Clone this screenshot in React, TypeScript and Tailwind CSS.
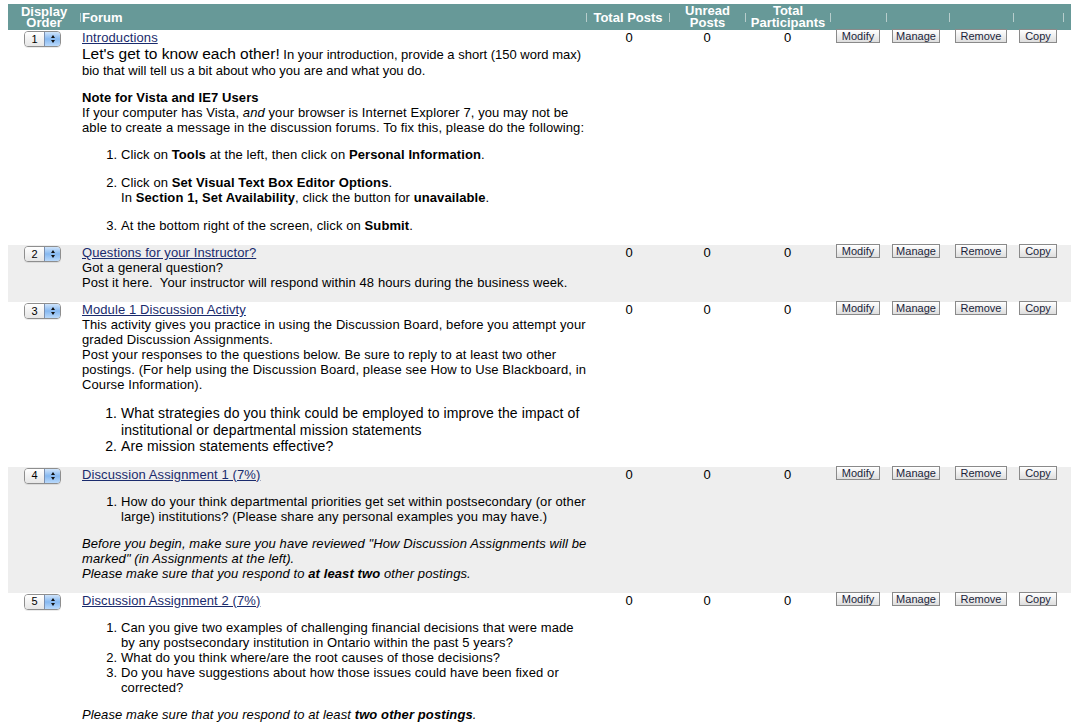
import React from "react";

const HEAD_COLS = "grid grid-cols-[72px_506px_83px_76px_85px_56px_63px_64px_50px_8px]";
const COLS = "grid grid-cols-[72px_509px_80px_76px_85px_56px_63px_64px_50px_8px]";

function Sep() {
  return <span className="h-[9px] w-px shrink-0 bg-[#b7cdcc]" />;
}

function HeadCell({ children, left }: { children?: React.ReactNode; left?: boolean }) {
  return (
    <div className="flex h-full items-center">
      <Sep />
      <div className={left ? "flex-1 pl-[1px] text-left" : "flex-1 text-center"}>{children}</div>
    </div>
  );
}

function Order({ n }: { n: number }) {
  return (
    <div className="ml-[16px] mt-[1px] flex h-[16px] w-[37px] overflow-hidden rounded-[4px] border border-[#8e8e8e] shadow-[0_1px_0_rgba(0,0,0,0.08)]">
      <div className="flex flex-1 items-center justify-center bg-linear-to-b from-white to-[#e6e6e6] text-[11px] leading-none text-black">
        {n}
      </div>
      <div className="flex w-[16px] flex-col items-center justify-center gap-[2px] border-l border-[#7a8fb0] bg-linear-to-b from-[#cfe4fb] via-[#86b8f0] to-[#b9d9fb]">
        <span className="block h-0 w-0 border-x-[2.5px] border-b-[3px] border-x-transparent border-b-[#111]" />
        <span className="block h-0 w-0 border-x-[2.5px] border-t-[3px] border-x-transparent border-t-[#111]" />
      </div>
    </div>
  );
}

function Btn({ label, w }: { label: string; w: string }) {
  return (
    <button
      className={`${w} ml-[6px] -mt-px h-[14px] border border-[#8a8a8a] bg-linear-to-b from-white to-[#dedede] text-center text-[11px] leading-[12px] tracking-normal text-[#1b1f3a]`}
    >
      {label}
    </button>
  );
}

function Row({ n, gray, children }: { n: number; gray?: boolean; children: React.ReactNode }) {
  return (
    <div className={`${COLS} pb-[12px] ${gray ? "bg-[#eeeeee]" : "bg-white"}`}>
      <div>
        <Order n={n} />
      </div>
      <div className="pl-[2px] tracking-[0.1px]">{children}</div>
      <div className="text-center">0</div>
      <div className="text-center">0</div>
      <div className="text-center">0</div>
      <div className="flex items-start">
        <Btn label="Modify" w="w-[44px]" />
      </div>
      <div className="flex items-start">
        <Btn label="Manage" w="w-[48px]" />
      </div>
      <div className="flex items-start">
        <Btn label="Remove" w="w-[52px]" />
      </div>
      <div className="flex items-start">
        <Btn label="Copy" w="w-[38px]" />
      </div>
      <div />
    </div>
  );
}

function Link({ children }: { children: React.ReactNode }) {
  return <a className="text-[#1a2b6d] underline underline-offset-[1px]">{children}</a>;
}

export default function App() {
  return (
    <div className="min-h-screen bg-white pl-2 pt-[4px] font-['Liberation_Sans',Arial,Helvetica,sans-serif] text-[13px] leading-[15px] text-black">
      <div className={`${HEAD_COLS} h-[26px] bg-[#679998] font-bold text-white`}>
        <div className="flex h-full flex-col items-center justify-center text-[13px] leading-[11px]">
          <span>Display</span>
          <span>Order</span>
        </div>
        <HeadCell left>Forum</HeadCell>
        <HeadCell>Total Posts</HeadCell>
        <HeadCell>
          <div className="leading-[12px]">
            Unread
            <br />
            Posts
          </div>
        </HeadCell>
        <HeadCell>
          <div className="leading-[12px]">
            Total
            <br />
            Participants
          </div>
        </HeadCell>
        <HeadCell />
        <HeadCell />
        <HeadCell />
        <HeadCell />
        <HeadCell />
      </div>

      <Row n={1}>
        <Link>Introductions</Link>
        <p className="tracking-normal">
          <span className="text-[15.5px] leading-[18px]">Let's get to know each other!</span> In your introduction,
          provide a short (150 word max) bio that will tell us a bit about who you are and what you do.
        </p>
        <p className="mt-[12px]">
          <b>Note for Vista and IE7 Users</b>
          <br />
          If your computer has Vista, <i>and</i> your browser is Internet Explorer 7, you may not be able to create a
          message in the discussion forums. To fix this, please do the following:
        </p>
        <ol className="mt-[12px] list-decimal space-y-[13px] pl-[39px]">
          <li>
            Click on <b>Tools</b> at the left, then click on <b>Personal Information</b>.
          </li>
          <li>
            Click on <b>Set Visual Text Box Editor Options</b>.
            <br />
            In <b>Section 1, Set Availability</b>, click the button for <b>unavailable</b>.
          </li>
          <li>
            At the bottom right of the screen, click on <b>Submit</b>.
          </li>
        </ol>
      </Row>

      <Row n={2} gray>
        <Link>Questions for your Instructor?</Link>
        <p>
          Got a general question?
          <br />
          Post it here.&nbsp; Your instructor will respond within 48 hours during the business week.
        </p>
      </Row>

      <Row n={3}>
        <Link>Module 1 Discussion Activty</Link>
        <p>
          This activity gives you practice in using the Discussion Board, before you attempt your graded Discussion
          Assignments.
          <br />
          Post your responses to the questions below. Be sure to reply to at least two other postings. (For help using
          the Discussion Board, please see How to Use Blackboard, in Course Information).
        </p>
        <ol className="mt-[13px] list-decimal pl-[39px] text-[14px] leading-[16.5px]">
          <li>What strategies do you think could be employed to improve the impact of institutional or departmental mission statements</li>
          <li>Are mission statements effective?</li>
        </ol>
      </Row>

      <Row n={4} gray>
        <Link>Discussion Assignment 1 (7%)</Link>
        <ol className="mt-[12px] list-decimal pl-[39px]">
          <li>
            How do your think departmental priorities get set within postsecondary (or other large) institutions? (Please
            share any personal examples you may have.)
          </li>
        </ol>
        <p className="mt-[12px] italic">
          Before you begin, make sure you have reviewed "How Discussion Assignments will be marked" (in Assignments at
          the left).
          <br />
          Please make sure that you respond to <b>at least two</b> other postings.
        </p>
      </Row>

      <Row n={5}>
        <Link>Discussion Assignment 2 (7%)</Link>
        <ol className="mt-[12px] list-decimal pl-[39px]">
          <li>
            Can you give two examples of challenging financial decisions that were made by any postsecondary institution
            in Ontario within the past 5 years?
          </li>
          <li>What do you think where/are the root causes of those decisions?</li>
          <li>Do you have suggestions about how those issues could have been fixed or corrected?</li>
        </ol>
        <p className="mt-[12px] italic">
          Please make sure that you respond to at least <b>two other postings</b>.
        </p>
      </Row>
    </div>
  );
}
